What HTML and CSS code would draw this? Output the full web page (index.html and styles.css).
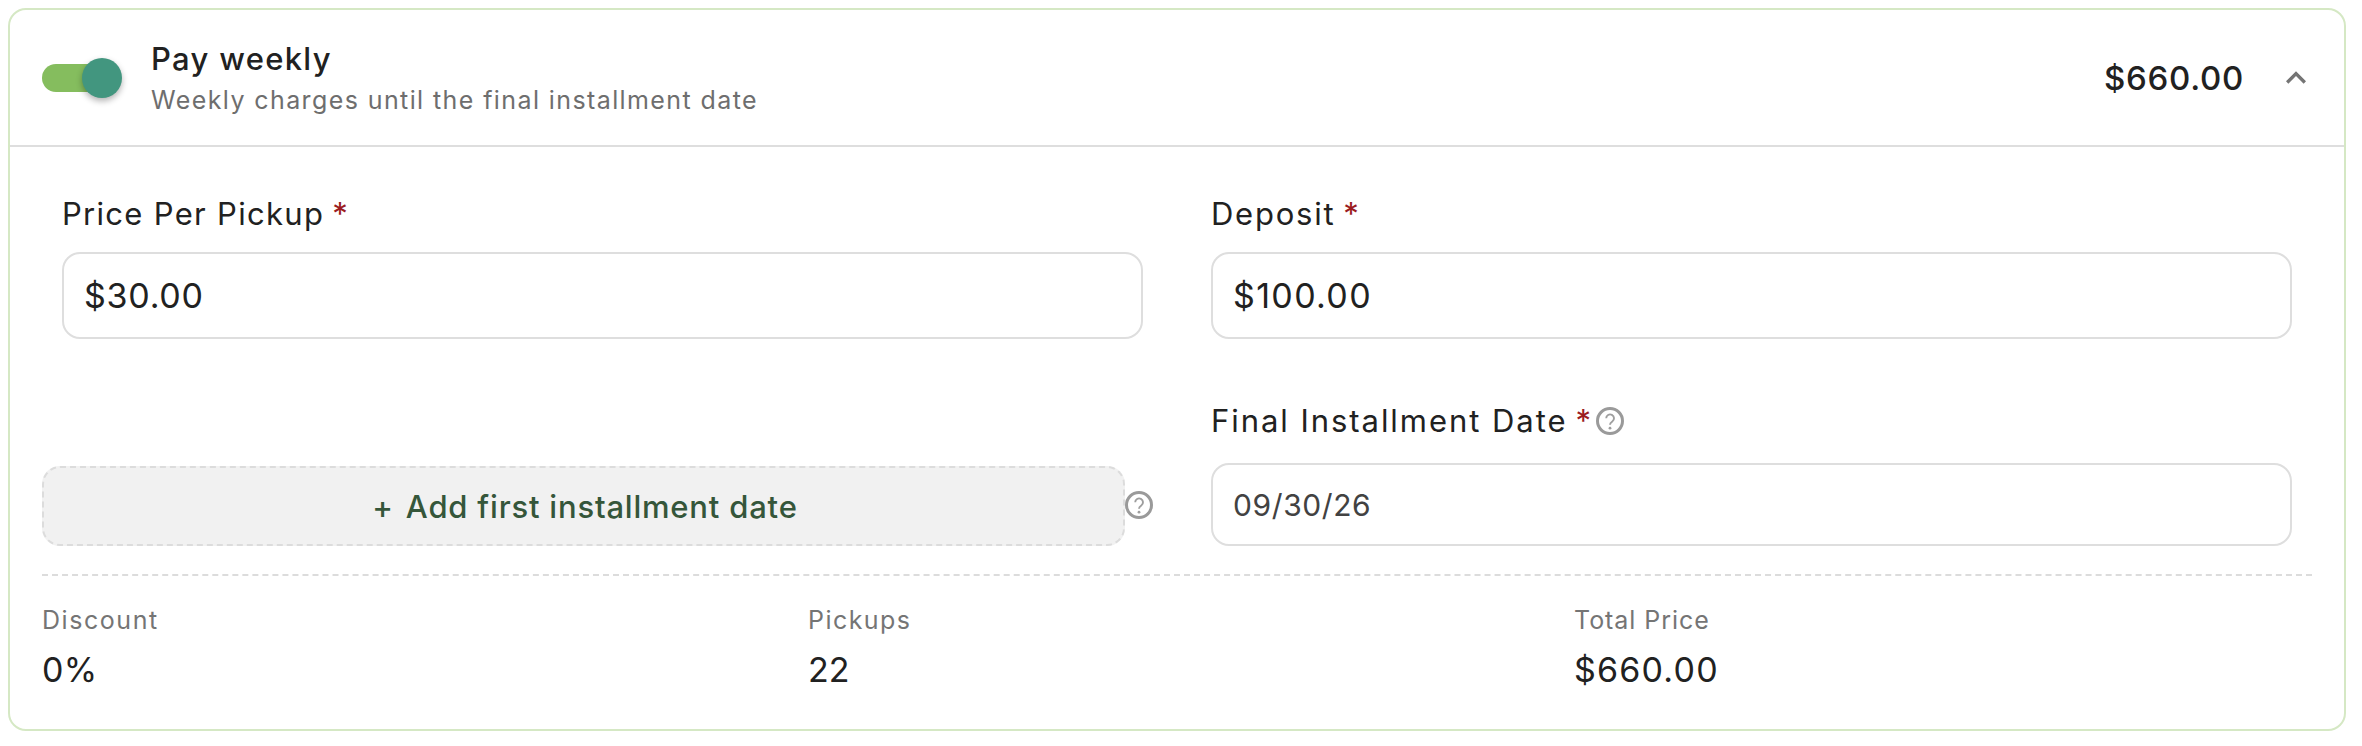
FILE: index.html
```html
<!DOCTYPE html>
<html lang="en">
<head>
<meta charset="utf-8">
<title>Pay weekly</title>
<link rel="stylesheet" href="styles.css">
</head>
<body>
<section class="card">
  <header class="head">
    <div class="switch"><span class="track"></span><span class="thumb"></span></div>
    <div class="head-text">
      <div class="title">Pay weekly</div>
      <div class="subtitle">Weekly charges until the final installment date</div>
    </div>
    <div class="head-price">$660.00</div>
    <svg class="chevron" viewBox="0 0 24 24"><path d="M12 8l-6 6 1.41 1.41L12 10.83l4.59 4.58L18 14z"/></svg>
  </header>
  <div class="body">
    <div class="row">
      <div class="cell cell-left">
        <div class="label"><span class="l-price">Price Per Pickup</span><span class="req">*</span></div>
        <div class="input input-big"><span class="v-30">$30.00</span></div>
      </div>
      <div class="cell cell-right">
        <div class="label"><span class="l-deposit">Deposit</span><span class="req">*</span></div>
        <div class="input input-big"><span class="v-100">$100.00</span></div>
      </div>
    </div>
    <div class="row row-second">
      <div class="cell cell-add">
        <button class="add" type="button"><span class="plus">+</span><span class="add-text">Add first installment date</span></button>
        <svg class="help help-add" viewBox="0 0 28 28"><circle class="ring" cx="14" cy="14" r="12.5"/><path class="q" d="M10.2 11.3a3.9 3.9 0 1 1 6.1 3.2c-1.5 1-2.3 1.7-2.3 3.2"/><circle class="dot" cx="14" cy="21.2" r="1.4"/></svg>
      </div>
      <div class="cell cell-right">
        <div class="label"><span class="l-final">Final Installment Date</span><span class="req">*</span>
          <svg class="help help-label" viewBox="0 0 28 28"><circle class="ring" cx="14" cy="14" r="12.5"/><path class="q" d="M10.2 11.3a3.9 3.9 0 1 1 6.1 3.2c-1.5 1-2.3 1.7-2.3 3.2"/><circle class="dot" cx="14" cy="21.2" r="1.4"/></svg>
        </div>
        <div class="input input-date"><span class="v-date">09/30/26</span></div>
      </div>
    </div>
    <div class="stats">
      <div class="stat"><div class="stat-label s-discount">Discount</div><div class="stat-value v-pct">0%</div></div>
      <div class="stat"><div class="stat-label s-pickups">Pickups</div><div class="stat-value v-22">22</div></div>
      <div class="stat"><div class="stat-label s-total">Total Price</div><div class="stat-value v-total">$660.00</div></div>
    </div>
  </div>
</section>
</body>
</html>
```

FILE: styles.css
```css
* { box-sizing: border-box; }
html, body { background: #fff; }
body {
  margin: 8px;
  font-family: Inter, "Liberation Sans", sans-serif;
  color: #212121;
}
.card {
  width: 2338px;
  height: 723px;
  border: 2px solid #d5e8c4;
  border-radius: 18px;
  overflow: hidden;
}
.head {
  height: 137px;
  border-bottom: 2px solid #dedede;
  display: flex;
  align-items: center;
  padding: 0 28px 0 32px;
}
.switch { position: relative; width: 80px; height: 40px; flex: none; }
.track {
  position: absolute; left: 0; top: 6px;
  width: 68px; height: 28px;
  border-radius: 14px;
  background: #85bd5e;
}
.thumb {
  position: absolute; left: 40px; top: 0;
  width: 40px; height: 40px;
  border-radius: 50%;
  background: #42967f;
  box-shadow: 0 3px 6px rgba(0,0,0,.3);
}
.head-text { margin-left: 29px; flex: 1; padding-top: 1px; }
.title { font-size: 31px; line-height: 36px; font-weight: 500; letter-spacing: 1.3px; }
.subtitle { font-size: 25px; line-height: 30px; margin-top: 8px; color: #6e6e6e; letter-spacing: 1.4px; }
.head-price { font-size: 33px; font-weight: 500; letter-spacing: .7px; }
.chevron { width: 40px; height: 40px; margin-left: 32px; fill: #757575; }

.body { padding: 0 32px; }
.row { display: grid; grid-template-columns: 1fr 1fr; padding-top: 49px; }
.row-second { padding-top: 64px; }
.cell-left { padding: 0 34px 0 20px; }
.cell-right { padding: 0 20px 0 34px; }
.label { display: flex; align-items: center; font-size: 31px; line-height: 36px; }
.l-price { letter-spacing: 1.3px; }
.l-deposit { letter-spacing: 1.75px; }
.l-final { letter-spacing: 1.95px; }
.req { color: #9b1c1f; margin-left: 8px; }
.input {
  margin-top: 20px;
  border: 2px solid #dedede;
  border-radius: 18px;
  display: flex;
  align-items: center;
  padding: 0 20px;
}
.input-big { height: 87px; font-size: 34px; }
.v-30 { letter-spacing: .75px; }
.v-100 { letter-spacing: 1.35px; }
.input-date { height: 83px; margin-top: 24px; font-size: 30px; color: #424242; letter-spacing: .6px; }
.help { flex: none; width: 28px; height: 28px; }
.ring { fill: none; stroke: #9a9a9a; stroke-width: 3; }
.q { fill: none; stroke: #9e9e9e; stroke-width: 1.9; }
.dot { fill: #9e9e9e; }
.help-label { margin-left: 5px; }
.cell-add { display: flex; align-items: flex-end; }
.add {
  width: 1083px; height: 80px;
  padding: 0 0 0 3px;
  background: #f1f1f1;
  border: 2px dashed #dcdcdc;
  border-radius: 18px;
  font: inherit;
  font-size: 31px;
  font-weight: 500;
  color: #35563a;
  letter-spacing: .8px;
  display: flex; align-items: center; justify-content: center;
}
.plus { margin-right: 12px; }
.help-add { margin-bottom: 27px; }
.stats {
  margin-top: 28px;
  border-top: 2px dashed #dcdcdc;
  display: grid;
  grid-template-columns: repeat(3, 1fr);
  column-gap: 28px;
  padding-top: 28px;
}
.stat-label { font-size: 25px; line-height: 32px; color: #757575; }
.s-discount { letter-spacing: 1.55px; }
.s-pickups { letter-spacing: 1.45px; }
.s-total { letter-spacing: .95px; }
.stat-value { font-size: 34px; line-height: 40px; margin-top: 14px; }
.v-pct { letter-spacing: .2px; }
.v-total { letter-spacing: 1.2px; }
```
